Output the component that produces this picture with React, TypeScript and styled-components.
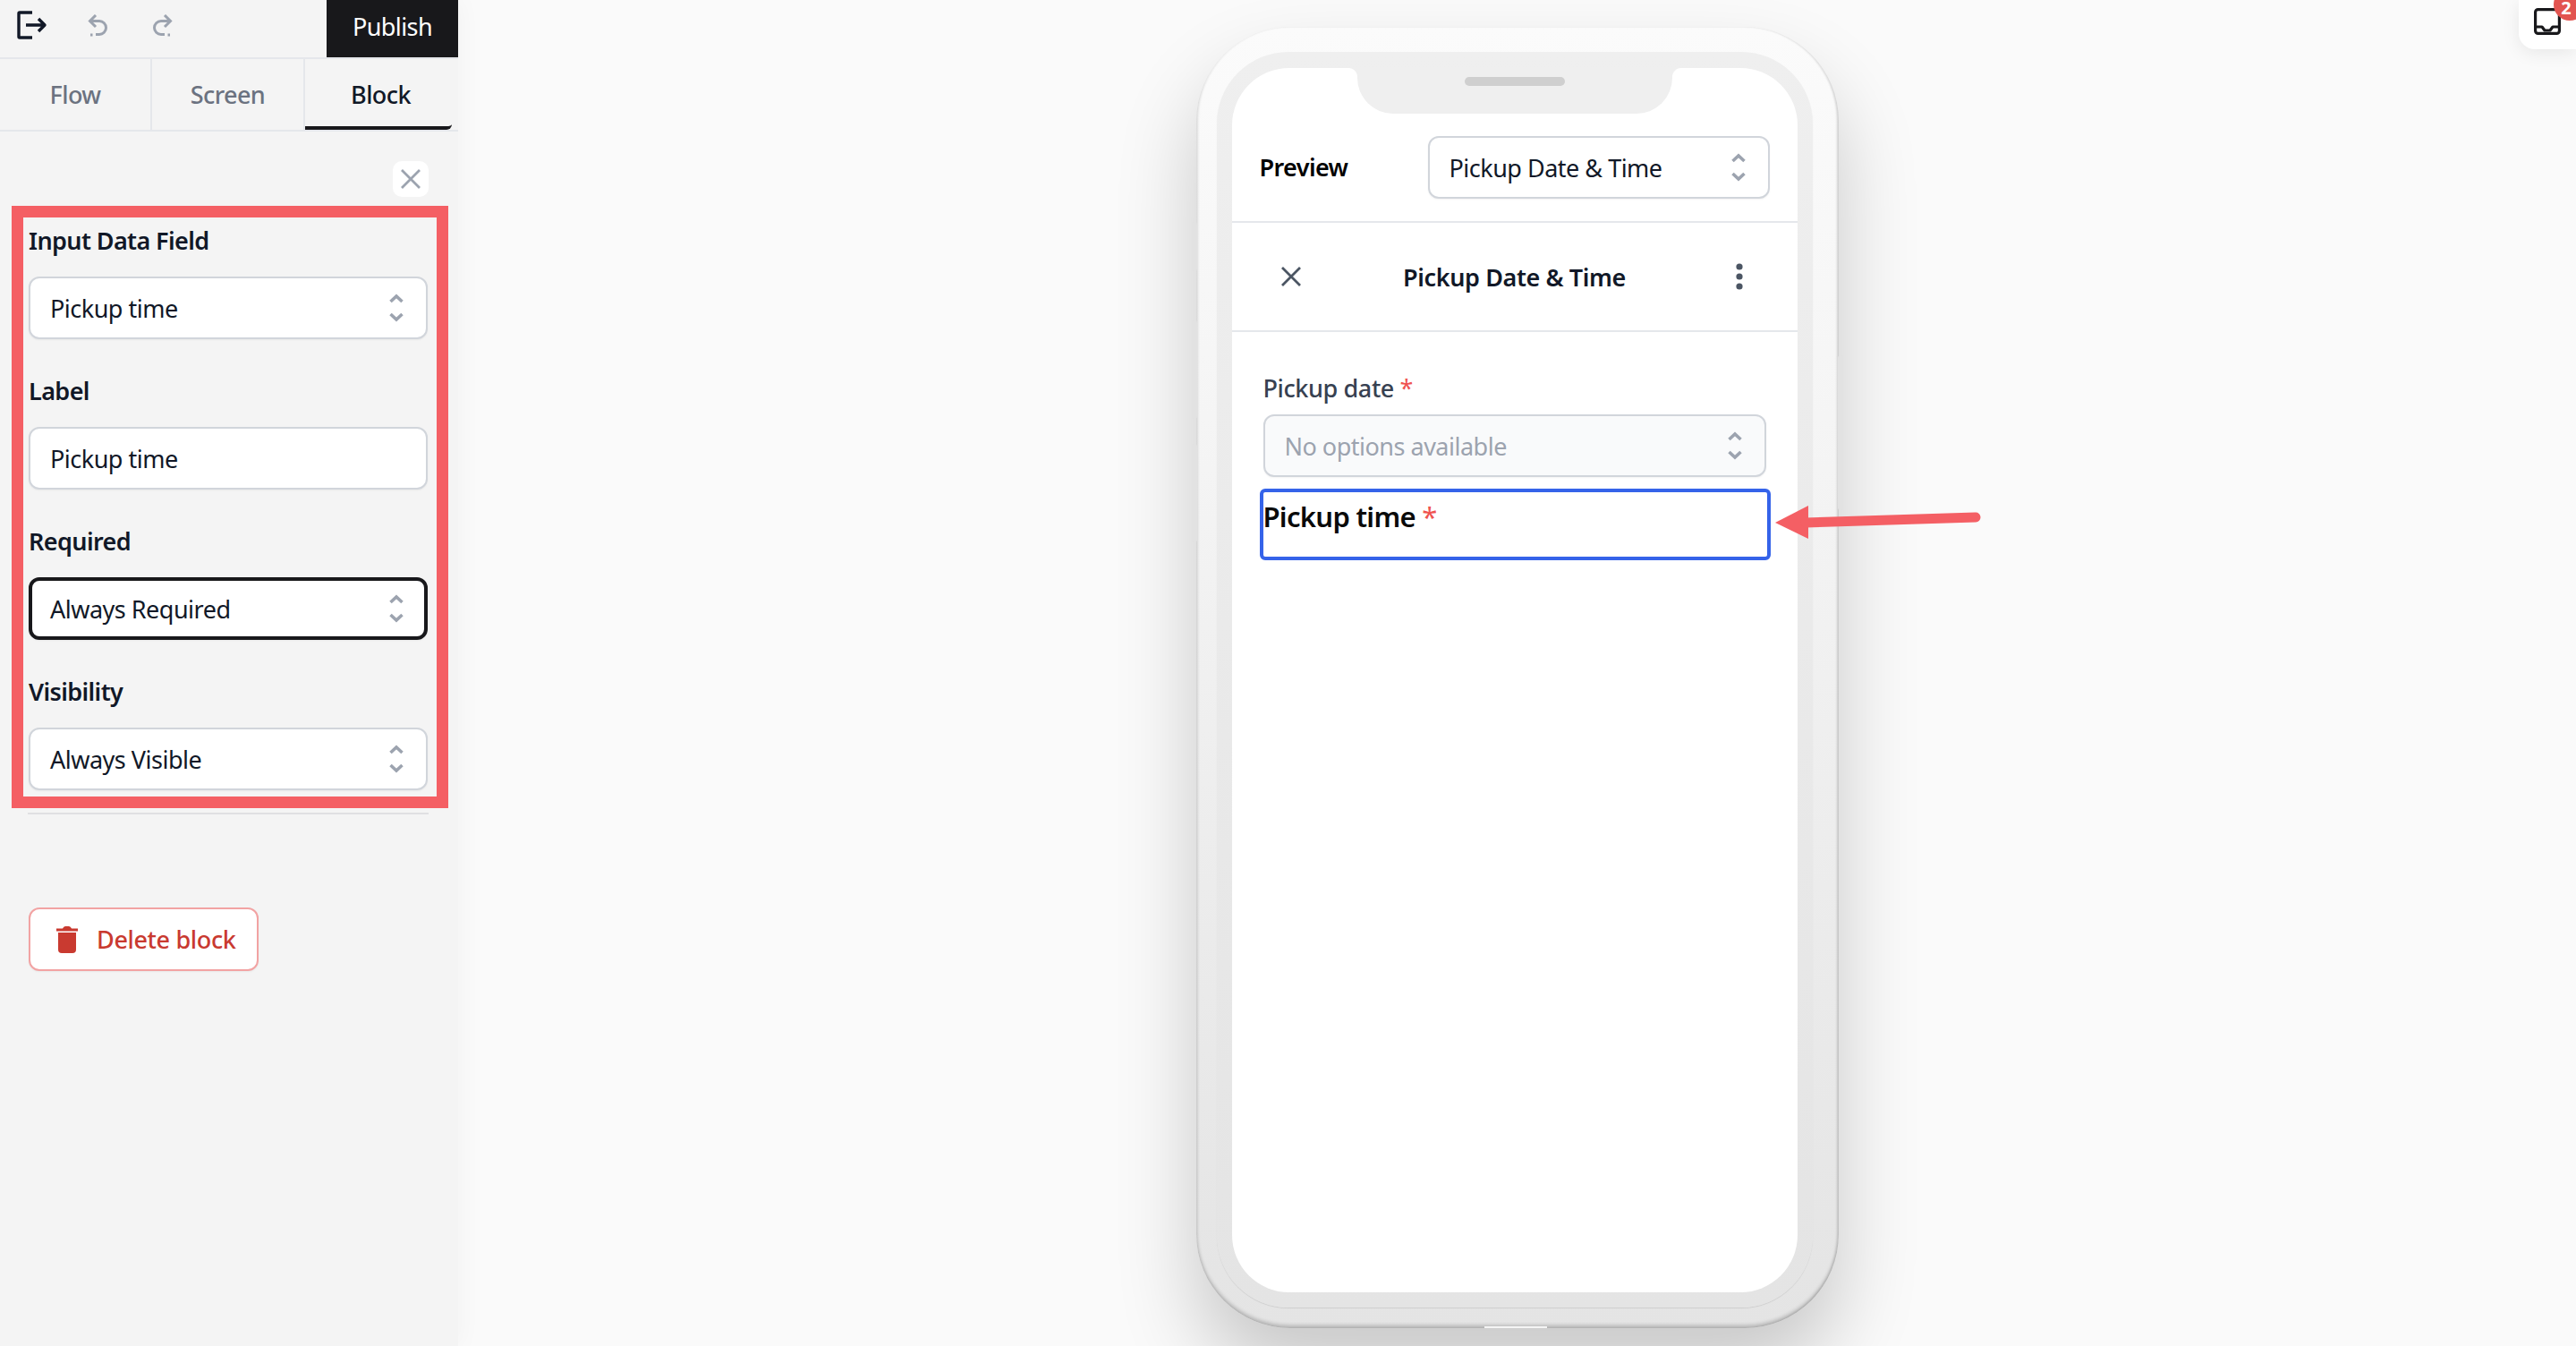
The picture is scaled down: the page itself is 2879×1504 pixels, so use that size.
import * as React from 'react';
import styled, { createGlobalStyle } from 'styled-components';

const GlobalStyle = createGlobalStyle`
  html, body {
    margin: 0;
    padding: 0;
    height: 100%;
    overflow: hidden;
    background: #fafafa;
  }
  #root {
    height: 100%;
  }
  * {
    box-sizing: border-box;
  }
`

const Page = styled.div`
  display: flex;
  width: 2879px;
  height: 1504px;
  font-family: "Noto Sans", "Open Sans", Arial, sans-serif;
  font-size: 27px;
  letter-spacing: -0.6px;
  color: #111827;
  overflow: hidden;
  position: relative;
`
const Sidebar = styled.aside`
  width: 512px;
  flex-shrink: 0;
  background: #f4f4f4;
  box-shadow: 4px 0 24px rgba(0, 0, 0, 0.03);
  display: flex;
  flex-direction: column;
  position: relative;
  z-index: 1;
`
const TopBar = styled.div`
  height: 66px;
  flex-shrink: 0;
  display: flex;
  align-items: flex-start;
  border-bottom: 2px solid #e5e7eb;
`
const IconGroup = styled.div`
  flex: 1;
  height: 56px;
  display: flex;
  align-items: center;
  padding-left: 19px;
  gap: 45px;
`
const IconSlot = styled.div<{ $width: number }>`
  width: ${(p) => p.$width}px;
  display: flex;
`
const PublishButton = styled.button`
  width: 147px;
  height: 64px;
  border: 0;
  background: #18181b;
  color: #fff;
  font: inherit;
  letter-spacing: inherit;
  padding: 0 0 6px;
`
const Tabs = styled.div`
  height: 81px;
  flex-shrink: 0;
  display: flex;
  border-bottom: 2px solid #e5e7eb;
`
const Tab = styled.div<{ $active?: boolean; $width: number }>`
  width: ${(p) => p.$width}px;
  display: flex;
  align-items: center;
  justify-content: center;
  font-weight: 500;
  color: ${(p) => (p.$active ? '#111827' : '#6b7280')};
  border-right: ${(p) => (p.$active ? 'none' : '2px solid #e5e7eb')};
  border-bottom: ${(p) => (p.$active ? '4px solid #18181b' : 'none')};
  border-bottom-right-radius: ${(p) => (p.$active ? '6px' : '0')};
  padding: ${(p) => (p.$active ? '4px 0 0 5px' : '0')};
`
const CloseRow = styled.div`
  display: flex;
  justify-content: flex-end;
  padding: 33px 33px 10px 0;
`
const CloseButton = styled.button`
  width: 40px;
  height: 40px;
  border: 0;
  padding: 0;
  border-radius: 10px;
  background: #fff;
  display: flex;
  align-items: center;
  justify-content: center;
`
const Highlight = styled.div`
  margin: 0 11px 0 13px;
  border: 13px solid #f45f64;
  padding: 6px 10px 7px 6px;
  display: flex;
  flex-direction: column;
  gap: 38px;
`
const Field = styled.div`
  display: flex;
  flex-direction: column;
  gap: 20px;
`
const FieldLabel = styled.div`
  line-height: 40px;
  font-weight: 600;
  color: #111827;
`
const Control = styled.div<{ $focused?: boolean; $disabled?: boolean; $width?: number }>`
  height: 70px;
  width: ${(p) => (p.$width ? `${p.$width}px` : 'auto')};
  display: flex;
  align-items: center;
  justify-content: space-between;
  border-radius: 12px;
  letter-spacing: -0.5px;
  background: ${(p) => (p.$disabled ? '#f9fafb' : '#fff')};
  border: ${(p) => (p.$focused ? '4px solid #18181b' : '2px solid #d1d5db')};
  padding: ${(p) => (p.$focused ? '0 23px 0 20px' : '0 25px 0 22px')};
  box-shadow: 0 1px 2px rgba(0, 0, 0, 0.05);
  color: ${(p) => (p.$disabled ? '#9ca3af' : '#111827')};
`
const Divider = styled.div`
  height: 2px;
  margin: 5px 33px 0 31px;
  background: #e0e0e2;
`
const DeleteButton = styled.button`
  margin: 104px 0 0 32px;
  width: 257px;
  height: 71px;
  display: flex;
  align-items: center;
  gap: 21px;
  padding: 0 0 0 29px;
  background: #fff;
  border: 2px solid #f2a3a3;
  border-radius: 12px;
  box-shadow: 0 1px 2px rgba(0, 0, 0, 0.05);
  font: inherit;
  letter-spacing: -0.35px;
  font-weight: 500;
  color: #c93a30;
`
const Canvas = styled.main`
  flex: 1;
  display: flex;
  justify-content: center;
  padding-top: 30px;
`
const Phone = styled.div`
  width: 718px;
  height: 1454px;
  position: relative;
  padding: 28px 29px 23px 23px;
  border-radius: 105px;
  background: linear-gradient(180deg, #fbfbfb 0%, #f5f5f5 30%, #ebebeb 70%, #e4e4e4 100%);
  box-shadow: 0 50px 90px rgba(0, 0, 0, 0.2), inset 0 -3px 4px rgba(0, 0, 0, 0.22),
    inset 2px 0 2px rgba(0, 0, 0, 0.03), inset -2px 0 2px rgba(0, 0, 0, 0.08);
`
const HomeSlot = styled.div`
  position: absolute;
  bottom: 0;
  left: 322px;
  width: 70px;
  height: 2px;
  background: #f4f4f4;
`
const Bezel = styled.div`
  height: 100%;
  padding: 18px 17px 17px;
  border-radius: 80px;
  background: linear-gradient(180deg, #efefef 0%, #e4e4e4 100%);
  box-shadow: 0 1px 1px rgba(0, 0, 0, 0.1);
`
const Screen = styled.div`
  height: 100%;
  background: #fff;
  border-radius: 64px;
  position: relative;
  overflow: hidden;
  display: flex;
  flex-direction: column;
`
const Notch = styled.div`
  position: absolute;
  top: 0;
  left: 140px;
  width: 352px;
  height: 51px;
  background: #efefef;
  border-radius: 0 0 40px 40px;
  &::before,
  &::after {
    content: '';
    position: absolute;
    top: 0;
    width: 10px;
    height: 10px;
  }
  &::before {
    left: -10px;
    background: radial-gradient(circle at 0 100%, #fff 9.5px, #efefef 10.5px);
  }
  &::after {
    right: -10px;
    background: radial-gradient(circle at 100% 100%, #fff 9.5px, #efefef 10.5px);
  }
`
const Speaker = styled.div`
  position: absolute;
  top: 10px;
  left: 120px;
  width: 112px;
  height: 10px;
  border-radius: 5px;
  background: #cfcfcf;
`
const SideKey = styled.div<{ $side: 'left' | 'right'; $top: number; $height: number }>`
  position: absolute;
  top: ${(p) => p.$top}px;
  ${(p) => p.$side}: -5px;
  width: 6px;
  height: ${(p) => p.$height}px;
  border-radius: 3px;
  background: #e2e2e2;
`
const PreviewRow = styled.div`
  height: 173px;
  flex-shrink: 0;
  padding: 76px 31px 0;
  display: flex;
  align-items: flex-start;
  justify-content: space-between;
  border-bottom: 2px solid #e5e7eb;
`
const PreviewLabel = styled.div`
  font-weight: 600;
  color: #000;
  line-height: 70px;
`
const HeaderRow = styled.div`
  height: 122px;
  flex-shrink: 0;
  padding: 0 60px 0 54px;
  display: grid;
  grid-template-columns: 1fr auto 1fr;
  align-items: center;
  border-bottom: 2px solid #e5e7eb;
  & > svg:last-child {
    justify-self: end;
  }
`
const HeaderTitle = styled.div`
  font-weight: 600;
  letter-spacing: -0.4px;
  margin-left: 6px;
  color: #111827;
`
const FormArea = styled.div`
  padding: 43px 35px 0;
  display: flex;
  flex-direction: column;
`
const FormLabel = styled.div`
  line-height: 40px;
  font-weight: 500;
  letter-spacing: -0.4px;
  color: #374151;
  margin-bottom: 9px;
`
const Star = styled.span`
  color: #ef5350;
  font-weight: 400;
`
const SelectedBlock = styled.div`
  margin: 13px -5px 0 -4px;
  height: 80px;
  border: 4px solid #3563e9;
  border-radius: 6px;
  font-size: 31px;
  letter-spacing: -0.7px;
  line-height: 54px;
  font-weight: 600;
  color: #0a0a0a;
`
const Arrow = styled.svg`
  position: absolute;
  left: 1980px;
  top: 560px;
`
const InboxCard = styled.div`
  position: absolute;
  top: 0;
  right: 0;
  width: 64px;
  height: 55px;
  background: #fff;
  border-bottom-left-radius: 18px;
  box-shadow: 0 4px 20px rgba(0, 0, 0, 0.08);
  overflow: hidden;
  z-index: 2;
`
const InboxIcon = styled.svg`
  position: absolute;
  left: 17px;
  top: 9px;
`
const Badge = styled.div`
  position: absolute;
  left: 39px;
  top: -13px;
  width: 36px;
  height: 36px;
  border-radius: 50%;
  background: #e25450;
  color: #fff;
  font-size: 20px;
  letter-spacing: 0;
  font-weight: 700;
  line-height: 44px;
  text-align: center;
  padding-right: 8px;
`

const Chevrons: React.FC = () => (
  <svg width="16" height="32" viewBox="0 0 16 32" fill="none" stroke="#9ca3af" strokeWidth="3.6">
    <path d="M1.5 9 L8 3 L14.5 9" />
    <path d="M1.5 23 L8 29 L14.5 23" />
  </svg>
);

const CloseIcon: React.FC<{ size: number; color: string }> = ({ size, color }) => (
  <svg width={size} height={size} viewBox="0 0 24 24" fill="none" stroke={color} strokeWidth="2.8">
    <path d="M2 2 L22 22 M22 2 L2 22" />
  </svg>
);

const ExitIcon: React.FC = () => (
  <svg width="34" height="32" viewBox="0 0 34 32" fill="none" stroke="#111827" strokeWidth="3.4" strokeLinejoin="round">
    <path d="M17 2 H3 a1 1 0 0 0 -1 1 V29 a1 1 0 0 0 1 1 H17" />
    <path d="M10 16 H31 M24 9 L31 16 L24 23" />
  </svg>
);

const UndoIcon: React.FC<{ flip?: boolean }> = ({ flip }) => (
  <svg width="22" height="25" viewBox="0 0 22 25" fill="none" stroke="#9ca3af" strokeWidth="3"
    transform={flip ? 'scale(-1 1)' : undefined}>
    <path d="M9 1 L2.5 7.5 L9 14" />
    <path d="M3 7.5 H13 a7 7 0 0 1 0 15 H9" />
    <path d="M3 23 H5.5" />
  </svg>
);

const TrashIcon: React.FC = () => (
  <svg width="24" height="30" viewBox="0 0 24 30" fill="#c93a30">
    <path d="M0 2.5 H7 Q8 0 10 0 H14 Q16 0 17 2.5 H24 V5.5 H0 Z" />
    <path d="M2 7 H22 V26 Q22 30 18 30 H6 Q2 30 2 26 Z" />
  </svg>
);

const DotsIcon: React.FC = () => (
  <svg width="10" height="30" viewBox="0 0 10 30" fill="#4b5563">
    <circle cx="5" cy="4" r="3.6" />
    <circle cx="5" cy="15" r="3.6" />
    <circle cx="5" cy="26" r="3.6" />
  </svg>
);

const fields = [
  { label: 'Input Data Field', value: 'Pickup time', select: true },
  { label: 'Label', value: 'Pickup time', select: false },
  { label: 'Required', value: 'Always Required', select: true, focused: true },
  { label: 'Visibility', value: 'Always Visible', select: true },
];

const App: React.FC = () => (
  <Page>
    <GlobalStyle />
    <Sidebar>
      <TopBar>
        <IconGroup>
          <IconSlot $width={34}><ExitIcon /></IconSlot>
          <IconSlot $width={28}><UndoIcon /></IconSlot>
          <IconSlot $width={22}><UndoIcon flip /></IconSlot>
        </IconGroup>
        <PublishButton>Publish</PublishButton>
      </TopBar>
      <Tabs>
        <Tab $width={170}>Flow</Tab>
        <Tab $width={171}>Screen</Tab>
        <Tab $width={164} $active>Block</Tab>
      </Tabs>
      <CloseRow>
        <CloseButton>
          <CloseIcon size={24} color="#9ca3af" />
        </CloseButton>
      </CloseRow>
      <Highlight>
        {fields.map((f) => (
          <Field key={f.label}>
            <FieldLabel>{f.label}</FieldLabel>
            <Control $focused={f.focused}>
              {f.value}
              {f.select && <Chevrons />}
            </Control>
          </Field>
        ))}
      </Highlight>
      <Divider />
      <DeleteButton>
        <TrashIcon />
        Delete block
      </DeleteButton>
    </Sidebar>
    <Canvas>
      <Phone>
        <SideKey $side="left" $top={218} $height={55} />
        <SideKey $side="left" $top={328} $height={110} />
        <SideKey $side="left" $top={466} $height={110} />
        <SideKey $side="right" $top={367} $height={173} />
        <HomeSlot />
        <Bezel>
          <Screen>
            <Notch>
              <Speaker />
            </Notch>
            <PreviewRow>
              <PreviewLabel>Preview</PreviewLabel>
              <Control $width={382}>
                Pickup Date &amp; Time
                <Chevrons />
              </Control>
            </PreviewRow>
            <HeaderRow>
              <CloseIcon size={24} color="#4b5563" />
              <HeaderTitle>Pickup Date &amp; Time</HeaderTitle>
              <DotsIcon />
            </HeaderRow>
            <FormArea>
              <FormLabel>Pickup date <Star>*</Star></FormLabel>
              <Control $disabled>
                No options available
                <Chevrons />
              </Control>
              <SelectedBlock>Pickup time <Star>*</Star></SelectedBlock>
            </FormArea>
          </Screen>
        </Bezel>
      </Phone>
    </Canvas>
    <Arrow width="236" height="46" viewBox="0 0 236 46">
      <path d="M4 24 L41 5 L41 42 Z" fill="#f45f64" />
      <path d="M38 24 L228 18" stroke="#f45f64" strokeWidth="11" strokeLinecap="round" />
    </Arrow>
    <InboxCard>
      <InboxIcon width="30" height="30" viewBox="0 0 30 30" fill="none" stroke="#18181b" strokeWidth="3.2" strokeLinejoin="round">
        <rect x="1.6" y="1.6" width="26.8" height="26.8" rx="3" />
        <path d="M2 21 H9 L12 25 H18 L21 21 H28" />
      </InboxIcon>
      <Badge>2</Badge>
    </InboxCard>
  </Page>
);

export default App;
